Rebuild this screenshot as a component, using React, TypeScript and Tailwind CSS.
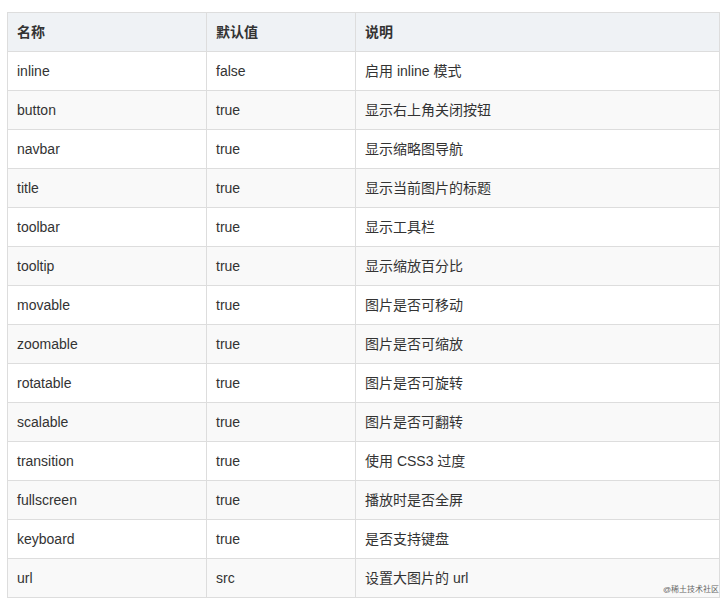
import React from "react";

const rows: [string, string, string][] = [
  ["inline", "false", "启用 inline 模式"],
  ["button", "true", "显示右上角关闭按钮"],
  ["navbar", "true", "显示缩略图导航"],
  ["title", "true", "显示当前图片的标题"],
  ["toolbar", "true", "显示工具栏"],
  ["tooltip", "true", "显示缩放百分比"],
  ["movable", "true", "图片是否可移动"],
  ["zoomable", "true", "图片是否可缩放"],
  ["rotatable", "true", "图片是否可旋转"],
  ["scalable", "true", "图片是否可翻转"],
  ["transition", "true", "使用 CSS3 过度"],
  ["fullscreen", "true", "播放时是否全屏"],
  ["keyboard", "true", "是否支持键盘"],
  ["url", "src", "设置大图片的 url"],
];

export default function App() {
  return (
    <div className="w-[727px] h-[605px] bg-white pt-[12px] pl-[7px] relative overflow-hidden" style={{ fontFamily: '"Liberation Sans", Arial, "Noto Sans CJK SC", sans-serif' }}>
      <table className="w-[713px] border-collapse text-[14px] text-[#333] table-fixed">
        <colgroup>
          <col className="w-[199px]" />
          <col className="w-[149px]" />
          <col />
        </colgroup>
        <thead>
          <tr className="bg-[#eff2f5] h-[39px]">
            {["名称", "默认值", "说明"].map((h) => (
              <th key={h} className="border border-[#dddddd] text-left font-bold px-[9px]">{h}</th>
            ))}
          </tr>
        </thead>
        <tbody>
          {rows.map((r, i) => (
            <tr key={r[0]} className={`h-[39px] ${i % 2 === 1 ? "bg-[#f9f9f9]" : "bg-white"}`}>
              {r.map((c, j) => (
                <td key={j} className="border border-[#dddddd] px-[9px]">{c}</td>
              ))}
            </tr>
          ))}
        </tbody>
      </table>
      <div className="absolute left-[663px] top-[585px] text-[8px] leading-[10px] whitespace-nowrap text-[#666]">@稀土技术社区</div>
    </div>
  );
}
